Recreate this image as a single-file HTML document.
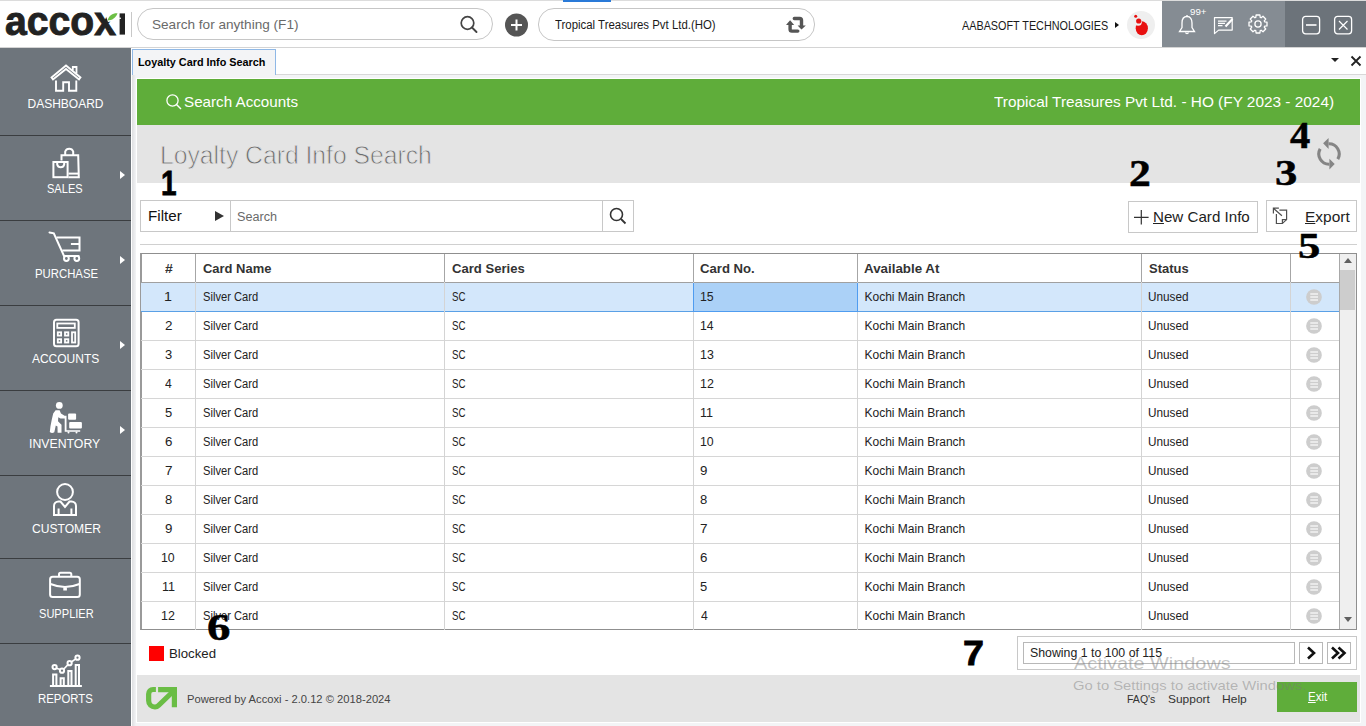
<!DOCTYPE html><html><head><meta charset="utf-8"><style>
*{box-sizing:border-box;margin:0;padding:0}
html,body{width:1366px;height:726px;overflow:hidden;background:#fff;font-family:"Liberation Sans",sans-serif;position:relative}
.abs{position:absolute}
.t{position:absolute;white-space:nowrap;line-height:normal}
</style></head><body>
<div class="abs" style="left:0px;top:0px;width:1366px;height:48px;background:#fff;border-top:1px solid #dcdcdc;border-bottom:1px solid #d4d4d4"></div>
<div class="abs" style="left:563px;top:0px;width:48px;height:2px;background:#2a7ad8"></div>
<svg class="abs" style="left:0;top:0" width="135" height="47" viewBox="0 0 135 47">
  <text x="5" y="34.6" font-family="Liberation Sans" font-weight="bold" font-size="41" fill="#222" stroke="#222" stroke-width="0.9" textLength="111" lengthAdjust="spacingAndGlyphs">accox</text>
  <path d="M104.5 12H119V20.2L108 22Z" fill="#fff"/>
  <rect x="119.6" y="13.4" width="5.4" height="21.2" fill="#222"/>
  <rect x="119.2" y="17.6" width="1.6" height="1.4" fill="#fff"/>
  <path d="M107.5 20.5 C109 15 113 13 117.5 13.3 C116 18 112 20.5 107.5 20.5Z" fill="#6cbf45"/>
</svg>
<div class="abs" style="left:131px;top:12px;width:1px;height:25px;background:#c8c8c8"></div>
<div class="abs" style="left:137px;top:8px;width:356px;height:32px;border:1px solid #c6c6c6;border-radius:16px"></div>
<div class="t" style="left:151.68px;top:16.50px;font-size:13.5px;color:#6a6a6a;font-family:'Liberation Sans',sans-serif;transform:scaleX(1.0062);transform-origin:0 0;">Search for anything (F1)</div>
<svg class="abs" style="left:459px;top:15px" width="20" height="20" viewBox="0 0 20 20"><circle cx="8.5" cy="8" r="6.3" fill="none" stroke="#444" stroke-width="1.7"/><path d="M13 12.5L17.5 17" stroke="#444" stroke-width="1.9" stroke-linecap="round"/></svg>
<svg class="abs" style="left:504px;top:13px" width="25" height="25" viewBox="0 0 25 25"><circle cx="12.5" cy="12" r="11.5" fill="#555"/><path d="M12.5 6.5V17.5M7 12H18" stroke="#fff" stroke-width="2"/></svg>
<div class="abs" style="left:538px;top:8px;width:277px;height:33px;border:1px solid #c6c6c6;border-radius:16px"></div>
<div class="t" style="left:555.45px;top:18.30px;font-size:12.3px;color:#1a1a1a;font-family:'Liberation Sans',sans-serif;transform:scaleX(0.9278);transform-origin:0 0;">Tropical Treasures Pvt Ltd.(HO)</div>
<svg class="abs" style="left:780px;top:10px" width="32" height="30" viewBox="0 0 32 30"><path d="M10.1 14V19.3Q10.1 21.1 11.9 21.1H17.8" fill="none" stroke="#555" stroke-width="3.4" stroke-linecap="round"/><path d="M6 14.9L10.1 10.2L14.2 14.9Z" fill="#555"/><path d="M14.3 8.5H19.7Q21.5 8.5 21.5 10.3V16" fill="none" stroke="#555" stroke-width="3.4" stroke-linecap="round"/><path d="M17.6 15.4L21.5 19.6L25.8 15.4Z" fill="#555"/></svg>
<div class="t" style="left:962.28px;top:18.80px;font-size:12.5px;color:#1a1a1a;font-family:'Liberation Sans',sans-serif;transform:scaleX(0.8651);transform-origin:0 0;">AABASOFT TECHNOLOGIES</div>
<div class="abs" style="left:1115px;top:22.2px;width:0;height:0;border-left:4.5px solid #111;border-top:3px solid transparent;border-bottom:3px solid transparent"></div>
<div class="abs" style="left:1127px;top:10.8px;width:28.4px;height:28.4px;border-radius:50%;background:#efefef"></div>
<svg class="abs" style="left:1126px;top:10px" width="29" height="29" viewBox="0 0 29 29"><ellipse cx="15.8" cy="18.3" rx="6.1" ry="7" fill="#e81010"/><circle cx="12.2" cy="12.2" r="3.6" fill="#efefef"/><circle cx="12.7" cy="11" r="2.6" fill="#e81010"/><circle cx="9.7" cy="6.3" r="1.5" fill="#e81010"/></svg>
<div class="abs" style="left:1162px;top:1px;width:123px;height:46px;background:#858c93"></div>
<div class="abs" style="left:1285px;top:1px;width:81px;height:46px;background:#6c737a"></div>
<svg class="abs" style="left:1176px;top:13px" width="22" height="24" viewBox="0 0 22 24"><path d="M11 3.5C7.5 3.5 6 6.5 6 10V14.5L3.5 18.5H18.5L16 14.5V10C16 6.5 14.5 3.5 11 3.5Z" fill="none" stroke="#fff" stroke-width="1.3"/><path d="M9.5 19.5A1.6 1.6 0 0 0 12.5 19.5" fill="none" stroke="#fff" stroke-width="1.3"/><path d="M11 2V3.5" stroke="#fff" stroke-width="1.3"/></svg>
<div class="t" style="left:1189.54px;top:7.00px;font-size:9px;color:#fff;font-family:'Liberation Sans',sans-serif;transform:scaleX(1.0764);transform-origin:0 0;">99+</div>
<svg class="abs" style="left:1212px;top:15px" width="24" height="21" viewBox="0 0 24 21"><path d="M2.5 2.6H20.2V15.1H6.6L2.5 18.6Z" fill="none" stroke="#fff" stroke-width="1.2" stroke-linejoin="round"/><path d="M6 6.1H14.5M6 8.4H13M6 10.7H10.5" stroke="#fff" stroke-width="1.2"/><path d="M13.5 11.5L20.5 4" stroke="#fff" stroke-width="2.2"/></svg>
<svg class="abs" style="left:1247.4px;top:13.3px" width="22" height="22" viewBox="0 0 22 22"><path d="M17.64 8.78 L20.00 9.09 L20.00 12.91 L17.64 13.22 L17.26 14.12 L18.72 16.01 L16.01 18.72 L14.12 17.26 L13.22 17.64 L12.91 20.00 L9.09 20.00 L8.78 17.64 L7.88 17.26 L5.99 18.72 L3.28 16.01 L4.74 14.12 L4.36 13.22 L2.00 12.91 L2.00 9.09 L4.36 8.78 L4.74 7.88 L3.28 5.99 L5.99 3.28 L7.88 4.74 L8.78 4.36 L9.09 2.00 L12.91 2.00 L13.22 4.36 L14.12 4.74 L16.01 3.28 L18.72 5.99 L17.26 7.88Z" fill="none" stroke="#fff" stroke-width="1.3" stroke-linejoin="round"/><circle cx="11" cy="11" r="3.1" fill="none" stroke="#fff" stroke-width="1.3"/></svg>
<svg class="abs" style="left:1301px;top:15px" width="20" height="20" viewBox="0 0 20 20"><rect x="1.6" y="1.4" width="17" height="17.4" rx="3" fill="none" stroke="#fff" stroke-width="1.3"/><path d="M5 10H15.5" stroke="#fff" stroke-width="1.6"/></svg>
<svg class="abs" style="left:1333px;top:15px" width="20" height="20" viewBox="0 0 20 20"><rect x="1.6" y="1.4" width="17" height="17.4" rx="3" fill="none" stroke="#fff" stroke-width="1.3"/><path d="M6 6L14.5 14.5M14.5 6L6 14.5" stroke="#fff" stroke-width="1.2"/></svg>
<div class="abs" style="left:0px;top:48px;width:131px;height:678px;background:#6e757c"></div>
<div class="abs" style="left:0px;top:135px;width:131px;height:1px;background:#3a3d40"></div>
<div class="abs" style="left:0px;top:220px;width:131px;height:1px;background:#3a3d40"></div>
<div class="abs" style="left:0px;top:305px;width:131px;height:1px;background:#3a3d40"></div>
<div class="abs" style="left:0px;top:390px;width:131px;height:1px;background:#3a3d40"></div>
<div class="abs" style="left:0px;top:475px;width:131px;height:1px;background:#3a3d40"></div>
<div class="abs" style="left:0px;top:558px;width:131px;height:1px;background:#3a3d40"></div>
<div class="abs" style="left:0px;top:643px;width:131px;height:1px;background:#3a3d40"></div>
<div class="t" style="left:27.52px;top:96.80px;font-size:12px;color:#fff;font-family:'Liberation Sans',sans-serif;">DASHBOARD</div>
<div class="t" style="left:47.49px;top:181.80px;font-size:12px;color:#fff;font-family:'Liberation Sans',sans-serif;transform:scaleX(0.9206);transform-origin:0 0;">SALES</div>
<div class="t" style="left:34.87px;top:266.80px;font-size:12px;color:#fff;font-family:'Liberation Sans',sans-serif;transform:scaleX(0.9450);transform-origin:0 0;">PURCHASE</div>
<div class="t" style="left:31.88px;top:351.80px;font-size:12px;color:#fff;font-family:'Liberation Sans',sans-serif;">ACCOUNTS</div>
<div class="t" style="left:29.37px;top:436.80px;font-size:12px;color:#fff;font-family:'Liberation Sans',sans-serif;transform:scaleX(1.0248);transform-origin:0 0;">INVENTORY</div>
<div class="t" style="left:31.58px;top:521.80px;font-size:12px;color:#fff;font-family:'Liberation Sans',sans-serif;transform:scaleX(1.0078);transform-origin:0 0;">CUSTOMER</div>
<div class="t" style="left:38.59px;top:606.80px;font-size:12px;color:#fff;font-family:'Liberation Sans',sans-serif;transform:scaleX(0.9221);transform-origin:0 0;">SUPPLIER</div>
<div class="t" style="left:38.47px;top:691.80px;font-size:12px;color:#fff;font-family:'Liberation Sans',sans-serif;transform:scaleX(0.9492);transform-origin:0 0;">REPORTS</div>
<div class="abs" style="left:120px;top:171px;width:0;height:0;border-left:5px solid #fff;border-top:4px solid transparent;border-bottom:4px solid transparent"></div>
<div class="abs" style="left:120px;top:256px;width:0;height:0;border-left:5px solid #fff;border-top:4px solid transparent;border-bottom:4px solid transparent"></div>
<div class="abs" style="left:120px;top:341px;width:0;height:0;border-left:5px solid #fff;border-top:4px solid transparent;border-bottom:4px solid transparent"></div>
<div class="abs" style="left:120px;top:426px;width:0;height:0;border-left:5px solid #fff;border-top:4px solid transparent;border-bottom:4px solid transparent"></div>
<!-- sidebar icons -->
<svg class="abs" style="left:0;top:47px" width="131" height="679" viewBox="0 47 131 679" fill="none" stroke="#fff" stroke-width="2">
  <!-- house -->
  <path d="M51.5 77.5L66 65.5L80.5 77.5L79 79.5L66 69L53 79.5Z" stroke-width="1.8" stroke-linejoin="miter"/>
  <path d="M72.8 70.5V67H76.5V73.5" stroke-width="1.8"/>
  <path d="M56 80.5V90.8H63.2V82.2H69V90.8H76.3V80.5" stroke-width="1.9"/>
  <!-- bags -->
  <path d="M61.5 160.5V155.2H78.2L78.8 177.2H68.5" />
  <path d="M65.2 156V151.5A4.3 4.3 0 0 1 73.2 151.5V156"/>
  <rect x="53.4" y="162" width="14.2" height="15.2"/>
  <path d="M57.2 162V164.5A3.6 3.6 0 0 0 64.2 164.5V162"/>
  <path d="M68.5 173.6H78.5"/>
  <!-- cart -->
  <path d="M49.5 232.4L53.8 233.3L64 255.9H78.6" stroke-linecap="round"/>
  <path d="M56.5 237.4H79.5V250.4H62.3"/>
  <path d="M70.9 244H79.5"/>
  <circle cx="66.4" cy="258.5" r="2.4"/>
  <circle cx="76.8" cy="258.5" r="2.4"/>
  <!-- calculator -->
  <rect x="54" y="319.8" width="24.6" height="26.4" rx="2.5"/>
  <rect x="57.3" y="323.5" width="17.5" height="4.4" stroke-width="1.8"/>
  <rect x="57.8" y="332.3" width="3.3" height="3.3" stroke-width="1.8"/>
  <rect x="65" y="332.3" width="3.3" height="3.3" stroke-width="1.8"/>
  <rect x="57.8" y="339.2" width="3.3" height="3.3" stroke-width="1.8"/>
  <rect x="65" y="339.2" width="3.3" height="3.3" stroke-width="1.8"/>
  <rect x="72" y="332.3" width="3.2" height="10.2" stroke-width="1.8"/>
  <!-- customer -->
  <circle cx="65" cy="492" r="7.9"/>
  <path d="M54 515V506A4.5 4.5 0 0 1 58.5 501.5H60.5L65 507L69.5 501.5H71.5A4.5 4.5 0 0 1 76 506V515Z"/>
  <path d="M58.6 508.5V515M71.4 508.5V515"/>
  <!-- briefcase -->
  <rect x="50.1" y="576.7" width="29.7" height="20.3" rx="2.5"/>
  <path d="M59 576.5V574.2A1.5 1.5 0 0 1 60.5 572.7H69.8A1.5 1.5 0 0 1 71.3 574.2V576.5"/>
  <path d="M50.5 584Q65 590 79.5 584"/>
  <path d="M64.2 587.5V589.5H66V587.5" stroke-width="1.8"/>
  <!-- reports -->
  <path d="M49.9 686H81.9"/>
  <path d="M53.1 686V674.6H56.4V686M60.6 686V678.2H63.8V686M68.3 686V671H71.5V686M75.7 686V665.1H79V686"/>
  <circle cx="54.6" cy="667.1" r="2.1"/>
  <circle cx="62" cy="670.7" r="2.1"/>
  <circle cx="69.6" cy="663.2" r="2.1"/>
  <circle cx="77.5" cy="657.7" r="2.1"/>
  <path d="M56.4 668.3L60.2 669.6M63.6 669.3L68 664.6M71.3 662L75.8 658.8" stroke-width="1.6"/>
  <!-- inventory (filled) -->
  <g fill="#fff" stroke="none">
    <circle cx="59.3" cy="405.4" r="3.4"/>
    <path d="M55.6 410.3L59.6 410.3L61 413.6L65 416L65.3 418.6L60.5 418.4L58.3 417.3L58 421.3L61.5 424.8L61.5 432.8L57.6 432.8L57.5 426.6L55.8 425.4L54.3 432.2Q52 433.8 49.8 432L50.5 426L51.8 419.5L53.2 413.6Z"/>
    <path d="M64.7 415.8H66.5V430.2H80.2V431.8H64.7Z"/>
    <rect x="68.1" y="413.4" width="8" height="6.3" rx="1"/>
    <rect x="69.2" y="421.9" width="12.7" height="6.6" rx="1"/>
    <circle cx="68.5" cy="432.5" r="1"/><circle cx="76.5" cy="432.5" r="1"/>
  </g>
</svg>
<div class="abs" style="left:131px;top:48px;width:6px;height:678px;background:#fff"></div>
<div class="abs" style="left:132px;top:75px;width:1234px;height:651px;background:#f3f4f6"></div>
<div class="abs" style="left:132px;top:75px;width:4px;height:651px;background:linear-gradient(90deg,#dedfe1,#f3f4f6)"></div>
<div class="abs" style="left:136px;top:78px;width:1225px;height:645px;background:#fff"></div>
<div class="abs" style="left:132px;top:49px;width:144px;height:26px;background:#f3f4f6;border:1px solid #8fb8e6;border-bottom:none"></div>
<div class="t" style="left:137.68px;top:56.00px;font-size:11.5px;color:#000;font-family:'Liberation Sans',sans-serif;font-weight:bold;transform:scaleX(0.9403);transform-origin:0 0;">Loyalty Card Info Search</div>
<div class="abs" style="left:276px;top:74px;width:1090px;height:1px;background:#d8d8d8"></div>
<div class="abs" style="left:1331px;top:58px;width:0;height:0;border-left:4px solid transparent;border-right:4px solid transparent;border-top:4px solid #222"></div>
<svg class="abs" style="left:1350px;top:55px" width="12" height="12" viewBox="0 0 12 12"><path d="M1.5 1.5L10.5 10.5M10.5 1.5L1.5 10.5" stroke="#222" stroke-width="1.8"/></svg>
<div class="abs" style="left:137px;top:79px;width:1223px;height:46px;background:#5fad3a"></div>
<svg class="abs" style="left:165px;top:93px" width="18" height="18" viewBox="0 0 18 18"><circle cx="7.5" cy="7.5" r="5.6" fill="none" stroke="#fff" stroke-width="1.3"/><path d="M11.5 11.5L16 16" stroke="#fff" stroke-width="1.4"/></svg>
<div class="t" style="left:183.80px;top:94.00px;font-size:14.6px;color:#fff;font-family:'Liberation Sans',sans-serif;transform:scaleX(1.0410);transform-origin:0 0;">Search Accounts</div>
<div class="t" style="left:994.36px;top:94.40px;font-size:14.6px;color:#fff;font-family:'Liberation Sans',sans-serif;transform:scaleX(1.0534);transform-origin:0 0;">Tropical Treasures Pvt Ltd. - HO (FY 2023 - 2024)</div>
<div class="abs" style="left:137px;top:125px;width:1223px;height:58px;background:#e4e4e4"></div>
<div class="t" style="left:160.47px;top:140.00px;font-size:26px;color:#6c6c6c;font-family:'Liberation Sans',sans-serif;transform:scaleX(0.9499);transform-origin:0 0;-webkit-text-stroke:0.8px #e4e4e4;">Loyalty Card Info Search</div>
<svg class="abs" style="left:1310px;top:132px" width="40" height="44" viewBox="0 0 40 44"><path d="M18.6 11.8A10.2 10.2 0 0 1 27.8 27.1M10.2 16.9A10.2 10.2 0 0 0 19.4 32.2" fill="none" stroke="#858585" stroke-width="3.1"/><path d="M13.1 11.3L18.6 5.9V16.9Z M24.7 32.1L19.4 26.7V37.6Z" fill="#858585"/></svg>
<div class="abs" style="left:140px;top:200px;width:494px;height:32px;border:1px solid #c8c8c8"></div>
<div class="abs" style="left:230px;top:201px;width:1px;height:30px;background:#c8c8c8"></div>
<div class="abs" style="left:602px;top:201px;width:1px;height:30px;background:#c8c8c8"></div>
<div class="t" style="left:147.56px;top:207.60px;font-size:14.3px;color:#111;font-family:'Liberation Sans',sans-serif;transform:scaleX(1.0606);transform-origin:0 0;">Filter</div>
<div class="abs" style="left:215px;top:211px;width:0;height:0;border-left:9px solid #333;border-top:5px solid transparent;border-bottom:5px solid transparent"></div>
<div class="t" style="left:236.72px;top:209.20px;font-size:13.7px;color:#6a6a6a;font-family:'Liberation Sans',sans-serif;transform:scaleX(0.9240);transform-origin:0 0;">Search</div>
<svg class="abs" style="left:608px;top:206px" width="20" height="20" viewBox="0 0 20 20"><circle cx="8.5" cy="8.5" r="6" fill="none" stroke="#333" stroke-width="1.6"/><path d="M13 13L17.5 17.5" stroke="#333" stroke-width="1.8"/></svg>
<div class="abs" style="left:1128px;top:201px;width:130px;height:32px;border:1px solid #c8c8c8"></div>
<svg class="abs" style="left:1133px;top:209px" width="17" height="17" viewBox="0 0 17 17"><path d="M8.3 1V15.6M1 8.3H15.6" stroke="#333" stroke-width="1.2"/></svg>
<div class="t" style="left:1153.26px;top:208.00px;font-size:15px;color:#222;font-family:'Liberation Sans',sans-serif;transform:scaleX(1.0095);transform-origin:0 0;"><u>N</u>ew Card Info</div>
<div class="abs" style="left:1266px;top:200px;width:91px;height:32px;border:1px solid #c8c8c8"></div>
<svg class="abs" style="left:1266px;top:198px" width="34" height="36" viewBox="0 0 34 36" fill="none" stroke="#505050" stroke-width="1.2"><path d="M7.4 15.6V10.2H12.9M7.4 10.2L15.9 17.8"/><path d="M10.4 15.9V25.5H16.4L20.6 21.6V12.1H13.4"/><path d="M16.4 25.5V21.6H20.6"/></svg>
<div class="t" style="left:1304.73px;top:208.00px;font-size:15px;color:#222;font-family:'Liberation Sans',sans-serif;transform:scaleX(1.0306);transform-origin:0 0;"><u>E</u>xport</div>
<div class="abs" style="left:140px;top:244px;width:1217px;height:1px;background:#d0d0d0"></div>
<div class="abs" style="left:140px;top:253px;width:1217px;height:377px;border:1px solid #8f8f8f;border-left:2px solid #9a9a9a"></div>
<div class="abs" style="left:141px;top:282px;width:1198px;height:29px;background:#d3e7fb"></div>
<div class="abs" style="left:693px;top:282px;width:164px;height:29px;background:#abd1f7"></div>
<div class="abs" style="left:141px;top:311px;width:1198px;height:1px;background:#5aa0e6"></div>
<div class="abs" style="left:141px;top:340px;width:1198px;height:1px;background:#d6d6d6"></div>
<div class="abs" style="left:141px;top:369px;width:1198px;height:1px;background:#d6d6d6"></div>
<div class="abs" style="left:141px;top:398px;width:1198px;height:1px;background:#d6d6d6"></div>
<div class="abs" style="left:141px;top:427px;width:1198px;height:1px;background:#d6d6d6"></div>
<div class="abs" style="left:141px;top:456px;width:1198px;height:1px;background:#d6d6d6"></div>
<div class="abs" style="left:141px;top:485px;width:1198px;height:1px;background:#d6d6d6"></div>
<div class="abs" style="left:141px;top:514px;width:1198px;height:1px;background:#d6d6d6"></div>
<div class="abs" style="left:141px;top:543px;width:1198px;height:1px;background:#d6d6d6"></div>
<div class="abs" style="left:141px;top:572px;width:1198px;height:1px;background:#d6d6d6"></div>
<div class="abs" style="left:141px;top:601px;width:1198px;height:1px;background:#d6d6d6"></div>
<div class="abs" style="left:141px;top:282px;width:1198px;height:1px;background:#a0a0a0"></div>
<div class="abs" style="left:195px;top:254px;width:1px;height:376px;background:#d4d4d4"></div>
<div class="abs" style="left:195px;top:254px;width:1px;height:28px;background:#a6a6a6"></div>
<div class="abs" style="left:444px;top:254px;width:1px;height:376px;background:#d4d4d4"></div>
<div class="abs" style="left:444px;top:254px;width:1px;height:28px;background:#a6a6a6"></div>
<div class="abs" style="left:693px;top:254px;width:1px;height:376px;background:#d4d4d4"></div>
<div class="abs" style="left:693px;top:254px;width:1px;height:28px;background:#a6a6a6"></div>
<div class="abs" style="left:857px;top:254px;width:1px;height:376px;background:#d4d4d4"></div>
<div class="abs" style="left:857px;top:254px;width:1px;height:28px;background:#a6a6a6"></div>
<div class="abs" style="left:1141px;top:254px;width:1px;height:376px;background:#d4d4d4"></div>
<div class="abs" style="left:1141px;top:254px;width:1px;height:28px;background:#a6a6a6"></div>
<div class="abs" style="left:1290px;top:254px;width:1px;height:376px;background:#d4d4d4"></div>
<div class="abs" style="left:1290px;top:254px;width:1px;height:28px;background:#a6a6a6"></div>
<div class="abs" style="left:693px;top:283px;width:165px;height:29px;border:1px solid #4f9cf0;border-top:none"></div>
<div class="t" style="left:164.66px;top:261.00px;font-size:13px;color:#333;font-family:'Liberation Sans',sans-serif;font-weight:bold;transform:scaleX(1.0737);transform-origin:0 0;">#</div>
<div class="t" style="left:202.67px;top:261.00px;font-size:13px;color:#333;font-family:'Liberation Sans',sans-serif;font-weight:bold;transform:scaleX(0.9961);transform-origin:0 0;">Card Name</div>
<div class="t" style="left:451.76px;top:261.00px;font-size:13px;color:#333;font-family:'Liberation Sans',sans-serif;font-weight:bold;transform:scaleX(1.0058);transform-origin:0 0;">Card Series</div>
<div class="t" style="left:700.46px;top:261.00px;font-size:13px;color:#333;font-family:'Liberation Sans',sans-serif;font-weight:bold;transform:scaleX(1.0106);transform-origin:0 0;">Card No.</div>
<div class="t" style="left:864.47px;top:261.00px;font-size:13px;color:#333;font-family:'Liberation Sans',sans-serif;font-weight:bold;transform:scaleX(1.0265);transform-origin:0 0;">Available At</div>
<div class="t" style="left:1149.22px;top:261.00px;font-size:13px;color:#333;font-family:'Liberation Sans',sans-serif;font-weight:bold;transform:scaleX(0.9970);transform-origin:0 0;">Status</div>
<div class="t" style="left:164.35px;top:289.70px;font-size:12px;color:#222;font-family:'Liberation Sans',sans-serif;transform:scaleX(1.1868);transform-origin:0 0;">1</div>
<div class="t" style="left:202.69px;top:289.70px;font-size:12px;color:#222;font-family:'Liberation Sans',sans-serif;transform:scaleX(0.9288);transform-origin:0 0;">Silver Card</div>
<div class="t" style="left:451.85px;top:289.70px;font-size:12px;color:#222;font-family:'Liberation Sans',sans-serif;transform:scaleX(0.8110);transform-origin:0 0;">SC</div>
<div class="t" style="left:700.06px;top:289.70px;font-size:12px;color:#222;font-family:'Liberation Sans',sans-serif;transform:scaleX(1.0292);transform-origin:0 0;">15</div>
<div class="t" style="left:864.52px;top:289.70px;font-size:12px;color:#222;font-family:'Liberation Sans',sans-serif;">Kochi Main Branch</div>
<div class="t" style="left:1148.49px;top:289.70px;font-size:12px;color:#222;font-family:'Liberation Sans',sans-serif;transform:scaleX(0.9805);transform-origin:0 0;">Unused</div>
<svg class="abs" style="left:1306px;top:289px" width="16" height="16" viewBox="0 0 16 16"><circle cx="8" cy="8" r="7.85" fill="#cdcdcd"/><path d="M4.3 5H12M4.3 8H12M4.3 11H12" stroke="#fff" stroke-opacity="0.75" stroke-width="1.3"/></svg>
<div class="t" style="left:164.76px;top:318.70px;font-size:12px;color:#222;font-family:'Liberation Sans',sans-serif;transform:scaleX(1.1218);transform-origin:0 0;">2</div>
<div class="t" style="left:202.69px;top:318.70px;font-size:12px;color:#222;font-family:'Liberation Sans',sans-serif;transform:scaleX(0.9288);transform-origin:0 0;">Silver Card</div>
<div class="t" style="left:451.85px;top:318.70px;font-size:12px;color:#222;font-family:'Liberation Sans',sans-serif;transform:scaleX(0.8110);transform-origin:0 0;">SC</div>
<div class="t" style="left:700.07px;top:318.70px;font-size:12px;color:#222;font-family:'Liberation Sans',sans-serif;transform:scaleX(1.0159);transform-origin:0 0;">14</div>
<div class="t" style="left:864.52px;top:318.70px;font-size:12px;color:#222;font-family:'Liberation Sans',sans-serif;">Kochi Main Branch</div>
<div class="t" style="left:1148.49px;top:318.70px;font-size:12px;color:#222;font-family:'Liberation Sans',sans-serif;transform:scaleX(0.9805);transform-origin:0 0;">Unused</div>
<svg class="abs" style="left:1306px;top:318px" width="16" height="16" viewBox="0 0 16 16"><circle cx="8" cy="8" r="7.85" fill="#cdcdcd"/><path d="M4.3 5H12M4.3 8H12M4.3 11H12" stroke="#fff" stroke-opacity="0.75" stroke-width="1.3"/></svg>
<div class="t" style="left:164.94px;top:347.70px;font-size:12px;color:#222;font-family:'Liberation Sans',sans-serif;transform:scaleX(1.0792);transform-origin:0 0;">3</div>
<div class="t" style="left:202.69px;top:347.70px;font-size:12px;color:#222;font-family:'Liberation Sans',sans-serif;transform:scaleX(0.9288);transform-origin:0 0;">Silver Card</div>
<div class="t" style="left:451.85px;top:347.70px;font-size:12px;color:#222;font-family:'Liberation Sans',sans-serif;transform:scaleX(0.8110);transform-origin:0 0;">SC</div>
<div class="t" style="left:700.06px;top:347.70px;font-size:12px;color:#222;font-family:'Liberation Sans',sans-serif;transform:scaleX(1.0313);transform-origin:0 0;">13</div>
<div class="t" style="left:864.52px;top:347.70px;font-size:12px;color:#222;font-family:'Liberation Sans',sans-serif;">Kochi Main Branch</div>
<div class="t" style="left:1148.49px;top:347.70px;font-size:12px;color:#222;font-family:'Liberation Sans',sans-serif;transform:scaleX(0.9805);transform-origin:0 0;">Unused</div>
<svg class="abs" style="left:1306px;top:347px" width="16" height="16" viewBox="0 0 16 16"><circle cx="8" cy="8" r="7.85" fill="#cdcdcd"/><path d="M4.3 5H12M4.3 8H12M4.3 11H12" stroke="#fff" stroke-opacity="0.75" stroke-width="1.3"/></svg>
<div class="t" style="left:165.15px;top:376.70px;font-size:12px;color:#222;font-family:'Liberation Sans',sans-serif;transform:scaleX(1.0149);transform-origin:0 0;">4</div>
<div class="t" style="left:202.69px;top:376.70px;font-size:12px;color:#222;font-family:'Liberation Sans',sans-serif;transform:scaleX(0.9288);transform-origin:0 0;">Silver Card</div>
<div class="t" style="left:451.85px;top:376.70px;font-size:12px;color:#222;font-family:'Liberation Sans',sans-serif;transform:scaleX(0.8110);transform-origin:0 0;">SC</div>
<div class="t" style="left:700.05px;top:376.70px;font-size:12px;color:#222;font-family:'Liberation Sans',sans-serif;transform:scaleX(1.0376);transform-origin:0 0;">12</div>
<div class="t" style="left:864.52px;top:376.70px;font-size:12px;color:#222;font-family:'Liberation Sans',sans-serif;">Kochi Main Branch</div>
<div class="t" style="left:1148.49px;top:376.70px;font-size:12px;color:#222;font-family:'Liberation Sans',sans-serif;transform:scaleX(0.9805);transform-origin:0 0;">Unused</div>
<svg class="abs" style="left:1306px;top:376px" width="16" height="16" viewBox="0 0 16 16"><circle cx="8" cy="8" r="7.85" fill="#cdcdcd"/><path d="M4.3 5H12M4.3 8H12M4.3 11H12" stroke="#fff" stroke-opacity="0.75" stroke-width="1.3"/></svg>
<div class="t" style="left:164.91px;top:405.70px;font-size:12px;color:#222;font-family:'Liberation Sans',sans-serif;transform:scaleX(1.0792);transform-origin:0 0;">5</div>
<div class="t" style="left:202.69px;top:405.70px;font-size:12px;color:#222;font-family:'Liberation Sans',sans-serif;transform:scaleX(0.9288);transform-origin:0 0;">Silver Card</div>
<div class="t" style="left:451.85px;top:405.70px;font-size:12px;color:#222;font-family:'Liberation Sans',sans-serif;transform:scaleX(0.8110);transform-origin:0 0;">SC</div>
<div class="t" style="left:700.05px;top:405.70px;font-size:12px;color:#222;font-family:'Liberation Sans',sans-serif;transform:scaleX(1.0460);transform-origin:0 0;">11</div>
<div class="t" style="left:864.52px;top:405.70px;font-size:12px;color:#222;font-family:'Liberation Sans',sans-serif;">Kochi Main Branch</div>
<div class="t" style="left:1148.49px;top:405.70px;font-size:12px;color:#222;font-family:'Liberation Sans',sans-serif;transform:scaleX(0.9805);transform-origin:0 0;">Unused</div>
<svg class="abs" style="left:1306px;top:405px" width="16" height="16" viewBox="0 0 16 16"><circle cx="8" cy="8" r="7.85" fill="#cdcdcd"/><path d="M4.3 5H12M4.3 8H12M4.3 11H12" stroke="#fff" stroke-opacity="0.75" stroke-width="1.3"/></svg>
<div class="t" style="left:164.75px;top:434.70px;font-size:12px;color:#222;font-family:'Liberation Sans',sans-serif;transform:scaleX(1.1096);transform-origin:0 0;">6</div>
<div class="t" style="left:202.69px;top:434.70px;font-size:12px;color:#222;font-family:'Liberation Sans',sans-serif;transform:scaleX(0.9288);transform-origin:0 0;">Silver Card</div>
<div class="t" style="left:451.85px;top:434.70px;font-size:12px;color:#222;font-family:'Liberation Sans',sans-serif;transform:scaleX(0.8110);transform-origin:0 0;">SC</div>
<div class="t" style="left:700.06px;top:434.70px;font-size:12px;color:#222;font-family:'Liberation Sans',sans-serif;transform:scaleX(1.0261);transform-origin:0 0;">10</div>
<div class="t" style="left:864.52px;top:434.70px;font-size:12px;color:#222;font-family:'Liberation Sans',sans-serif;">Kochi Main Branch</div>
<div class="t" style="left:1148.49px;top:434.70px;font-size:12px;color:#222;font-family:'Liberation Sans',sans-serif;transform:scaleX(0.9805);transform-origin:0 0;">Unused</div>
<svg class="abs" style="left:1306px;top:434px" width="16" height="16" viewBox="0 0 16 16"><circle cx="8" cy="8" r="7.85" fill="#cdcdcd"/><path d="M4.3 5H12M4.3 8H12M4.3 11H12" stroke="#fff" stroke-opacity="0.75" stroke-width="1.3"/></svg>
<div class="t" style="left:164.74px;top:463.70px;font-size:12px;color:#222;font-family:'Liberation Sans',sans-serif;transform:scaleX(1.1242);transform-origin:0 0;">7</div>
<div class="t" style="left:202.69px;top:463.70px;font-size:12px;color:#222;font-family:'Liberation Sans',sans-serif;transform:scaleX(0.9288);transform-origin:0 0;">Silver Card</div>
<div class="t" style="left:451.85px;top:463.70px;font-size:12px;color:#222;font-family:'Liberation Sans',sans-serif;transform:scaleX(0.8110);transform-origin:0 0;">SC</div>
<div class="t" style="left:700.38px;top:463.70px;font-size:12px;color:#222;font-family:'Liberation Sans',sans-serif;transform:scaleX(1.1072);transform-origin:0 0;">9</div>
<div class="t" style="left:864.52px;top:463.70px;font-size:12px;color:#222;font-family:'Liberation Sans',sans-serif;">Kochi Main Branch</div>
<div class="t" style="left:1148.49px;top:463.70px;font-size:12px;color:#222;font-family:'Liberation Sans',sans-serif;transform:scaleX(0.9805);transform-origin:0 0;">Unused</div>
<svg class="abs" style="left:1306px;top:463px" width="16" height="16" viewBox="0 0 16 16"><circle cx="8" cy="8" r="7.85" fill="#cdcdcd"/><path d="M4.3 5H12M4.3 8H12M4.3 11H12" stroke="#fff" stroke-opacity="0.75" stroke-width="1.3"/></svg>
<div class="t" style="left:164.87px;top:492.70px;font-size:12px;color:#222;font-family:'Liberation Sans',sans-serif;transform:scaleX(1.0883);transform-origin:0 0;">8</div>
<div class="t" style="left:202.69px;top:492.70px;font-size:12px;color:#222;font-family:'Liberation Sans',sans-serif;transform:scaleX(0.9288);transform-origin:0 0;">Silver Card</div>
<div class="t" style="left:451.85px;top:492.70px;font-size:12px;color:#222;font-family:'Liberation Sans',sans-serif;transform:scaleX(0.8110);transform-origin:0 0;">SC</div>
<div class="t" style="left:700.44px;top:492.70px;font-size:12px;color:#222;font-family:'Liberation Sans',sans-serif;transform:scaleX(1.0883);transform-origin:0 0;">8</div>
<div class="t" style="left:864.52px;top:492.70px;font-size:12px;color:#222;font-family:'Liberation Sans',sans-serif;">Kochi Main Branch</div>
<div class="t" style="left:1148.49px;top:492.70px;font-size:12px;color:#222;font-family:'Liberation Sans',sans-serif;transform:scaleX(0.9805);transform-origin:0 0;">Unused</div>
<svg class="abs" style="left:1306px;top:492px" width="16" height="16" viewBox="0 0 16 16"><circle cx="8" cy="8" r="7.85" fill="#cdcdcd"/><path d="M4.3 5H12M4.3 8H12M4.3 11H12" stroke="#fff" stroke-opacity="0.75" stroke-width="1.3"/></svg>
<div class="t" style="left:164.81px;top:521.70px;font-size:12px;color:#222;font-family:'Liberation Sans',sans-serif;transform:scaleX(1.1072);transform-origin:0 0;">9</div>
<div class="t" style="left:202.69px;top:521.70px;font-size:12px;color:#222;font-family:'Liberation Sans',sans-serif;transform:scaleX(0.9288);transform-origin:0 0;">Silver Card</div>
<div class="t" style="left:451.85px;top:521.70px;font-size:12px;color:#222;font-family:'Liberation Sans',sans-serif;transform:scaleX(0.8110);transform-origin:0 0;">SC</div>
<div class="t" style="left:700.31px;top:521.70px;font-size:12px;color:#222;font-family:'Liberation Sans',sans-serif;transform:scaleX(1.1242);transform-origin:0 0;">7</div>
<div class="t" style="left:864.52px;top:521.70px;font-size:12px;color:#222;font-family:'Liberation Sans',sans-serif;">Kochi Main Branch</div>
<div class="t" style="left:1148.49px;top:521.70px;font-size:12px;color:#222;font-family:'Liberation Sans',sans-serif;transform:scaleX(0.9805);transform-origin:0 0;">Unused</div>
<svg class="abs" style="left:1306px;top:521px" width="16" height="16" viewBox="0 0 16 16"><circle cx="8" cy="8" r="7.85" fill="#cdcdcd"/><path d="M4.3 5H12M4.3 8H12M4.3 11H12" stroke="#fff" stroke-opacity="0.75" stroke-width="1.3"/></svg>
<div class="t" style="left:161.43px;top:550.70px;font-size:12px;color:#222;font-family:'Liberation Sans',sans-serif;transform:scaleX(1.0261);transform-origin:0 0;">10</div>
<div class="t" style="left:202.69px;top:550.70px;font-size:12px;color:#222;font-family:'Liberation Sans',sans-serif;transform:scaleX(0.9288);transform-origin:0 0;">Silver Card</div>
<div class="t" style="left:451.85px;top:550.70px;font-size:12px;color:#222;font-family:'Liberation Sans',sans-serif;transform:scaleX(0.8110);transform-origin:0 0;">SC</div>
<div class="t" style="left:700.32px;top:550.70px;font-size:12px;color:#222;font-family:'Liberation Sans',sans-serif;transform:scaleX(1.1096);transform-origin:0 0;">6</div>
<div class="t" style="left:864.52px;top:550.70px;font-size:12px;color:#222;font-family:'Liberation Sans',sans-serif;">Kochi Main Branch</div>
<div class="t" style="left:1148.49px;top:550.70px;font-size:12px;color:#222;font-family:'Liberation Sans',sans-serif;transform:scaleX(0.9805);transform-origin:0 0;">Unused</div>
<svg class="abs" style="left:1306px;top:550px" width="16" height="16" viewBox="0 0 16 16"><circle cx="8" cy="8" r="7.85" fill="#cdcdcd"/><path d="M4.3 5H12M4.3 8H12M4.3 11H12" stroke="#fff" stroke-opacity="0.75" stroke-width="1.3"/></svg>
<div class="t" style="left:161.82px;top:579.70px;font-size:12px;color:#222;font-family:'Liberation Sans',sans-serif;transform:scaleX(1.0460);transform-origin:0 0;">11</div>
<div class="t" style="left:202.69px;top:579.70px;font-size:12px;color:#222;font-family:'Liberation Sans',sans-serif;transform:scaleX(0.9288);transform-origin:0 0;">Silver Card</div>
<div class="t" style="left:451.85px;top:579.70px;font-size:12px;color:#222;font-family:'Liberation Sans',sans-serif;transform:scaleX(0.8110);transform-origin:0 0;">SC</div>
<div class="t" style="left:700.48px;top:579.70px;font-size:12px;color:#222;font-family:'Liberation Sans',sans-serif;transform:scaleX(1.0792);transform-origin:0 0;">5</div>
<div class="t" style="left:864.52px;top:579.70px;font-size:12px;color:#222;font-family:'Liberation Sans',sans-serif;">Kochi Main Branch</div>
<div class="t" style="left:1148.49px;top:579.70px;font-size:12px;color:#222;font-family:'Liberation Sans',sans-serif;transform:scaleX(0.9805);transform-origin:0 0;">Unused</div>
<svg class="abs" style="left:1306px;top:579px" width="16" height="16" viewBox="0 0 16 16"><circle cx="8" cy="8" r="7.85" fill="#cdcdcd"/><path d="M4.3 5H12M4.3 8H12M4.3 11H12" stroke="#fff" stroke-opacity="0.75" stroke-width="1.3"/></svg>
<div class="t" style="left:161.42px;top:608.70px;font-size:12px;color:#222;font-family:'Liberation Sans',sans-serif;transform:scaleX(1.0376);transform-origin:0 0;">12</div>
<div class="t" style="left:202.69px;top:608.70px;font-size:12px;color:#222;font-family:'Liberation Sans',sans-serif;transform:scaleX(0.9288);transform-origin:0 0;">Silver Card</div>
<div class="t" style="left:451.85px;top:608.70px;font-size:12px;color:#222;font-family:'Liberation Sans',sans-serif;transform:scaleX(0.8110);transform-origin:0 0;">SC</div>
<div class="t" style="left:700.72px;top:608.70px;font-size:12px;color:#222;font-family:'Liberation Sans',sans-serif;transform:scaleX(1.0149);transform-origin:0 0;">4</div>
<div class="t" style="left:864.52px;top:608.70px;font-size:12px;color:#222;font-family:'Liberation Sans',sans-serif;">Kochi Main Branch</div>
<div class="t" style="left:1148.49px;top:608.70px;font-size:12px;color:#222;font-family:'Liberation Sans',sans-serif;transform:scaleX(0.9805);transform-origin:0 0;">Unused</div>
<svg class="abs" style="left:1306px;top:608px" width="16" height="16" viewBox="0 0 16 16"><circle cx="8" cy="8" r="7.85" fill="#cdcdcd"/><path d="M4.3 5H12M4.3 8H12M4.3 11H12" stroke="#fff" stroke-opacity="0.75" stroke-width="1.3"/></svg>
<div class="abs" style="left:1339px;top:254px;width:17px;height:375px;background:#efefef;border-left:1px solid #a8a8a8"></div>
<div class="abs" style="left:1340px;top:270px;width:15px;height:40px;background:#cdcdcd"></div>
<div class="abs" style="left:1344px;top:258px;width:0;height:0;border-left:4px solid transparent;border-right:4px solid transparent;border-bottom:5px solid #606060"></div>
<div class="abs" style="left:1344px;top:617px;width:0;height:0;border-left:4px solid transparent;border-right:4px solid transparent;border-top:5px solid #606060"></div>
<div class="abs" style="left:149px;top:646px;width:15px;height:15px;background:#f00"></div>
<div class="t" style="left:169.22px;top:646.00px;font-size:12.8px;color:#222;font-family:'Liberation Sans',sans-serif;transform:scaleX(1.0330);transform-origin:0 0;">Blocked</div>
<div class="abs" style="left:1017px;top:636px;width:340px;height:34px;border:1px solid #c8c8c8"></div>
<div class="abs" style="left:1023px;top:642px;width:272px;height:22px;border:1px solid #b8b8b8"></div>
<div class="t" style="left:1030.43px;top:646.10px;font-size:12px;color:#222;font-family:'Liberation Sans',sans-serif;transform:scaleX(1.0268);transform-origin:0 0;">Showing 1 to 100 of 115</div>
<div class="abs" style="left:1299px;top:642px;width:24px;height:22px;border:1px solid #b8b8b8"></div>
<div class="abs" style="left:1327px;top:642px;width:24px;height:22px;border:1px solid #b8b8b8"></div>
<svg class="abs" style="left:1299px;top:642px" width="24" height="22" viewBox="0 0 24 22"><path d="M9 5.5L15 11L9 16.5" fill="none" stroke="#111" stroke-width="2.6"/></svg>
<svg class="abs" style="left:1327px;top:642px" width="24" height="22" viewBox="0 0 24 22"><path d="M5 5.5L11 11L5 16.5M11.5 5.5L17.5 11L11.5 16.5" fill="none" stroke="#111" stroke-width="2.6"/></svg>
<div class="abs" style="left:137px;top:675px;width:1223px;height:47px;background:#e4e4e4"></div>
<svg class="abs" style="left:140px;top:680px" width="45" height="35" viewBox="0 0 45 35"><path d="M15.9 9.5H13C10.5 9.5 8.65 11.4 8.65 14V20.5C8.65 24.5 11.5 27 15 27C16.5 27 17.5 26.5 18.5 25.5L32.5 12" fill="none" stroke="#6abd45" stroke-width="5.2"/><path d="M18.1 7H37V27.3H31.8V12.3H18.1Z" fill="#6abd45"/></svg>
<div class="t" style="left:187.48px;top:693.20px;font-size:11.5px;color:#444;font-family:'Liberation Sans',sans-serif;transform:scaleX(0.9729);transform-origin:0 0;">Powered by Accoxi - 2.0.12 © 2018-2024</div>
<div class="t" style="left:1126.64px;top:693.20px;font-size:11.5px;color:#333;font-family:'Liberation Sans',sans-serif;transform:scaleX(0.9159);transform-origin:0 0;">FAQ's</div>
<div class="t" style="left:1167.75px;top:693.20px;font-size:11.5px;color:#333;font-family:'Liberation Sans',sans-serif;transform:scaleX(1.0384);transform-origin:0 0;">Support</div>
<div class="t" style="left:1222.21px;top:693.20px;font-size:11.5px;color:#333;font-family:'Liberation Sans',sans-serif;transform:scaleX(1.0482);transform-origin:0 0;">Help</div>
<div class="abs" style="left:1277px;top:682px;width:80px;height:30px;background:#5fad3a"></div>
<div class="t" style="left:1307.75px;top:689.90px;font-size:12.2px;color:#fff;font-family:'Liberation Sans',sans-serif;transform:scaleX(0.9454);transform-origin:0 0;"><u>E</u>xit</div>
<div class="t" style="left:1073.66px;top:655.00px;font-size:16px;color:rgba(120,120,120,0.45);font-family:'Liberation Sans',sans-serif;transform:scaleX(1.2406);transform-origin:0 0;">Activate Windows</div>
<div class="t" style="left:1072.96px;top:677.50px;font-size:13.3px;color:rgba(120,120,120,0.45);font-family:'Liberation Sans',sans-serif;transform:scaleX(1.1117);transform-origin:0 0;">Go to Settings to activate Windows.</div>
<div class="t" style="left:161.24px;top:163.40px;font-size:35.61px;color:#000;font-family:'Liberation Sans',sans-serif;font-weight:bold;transform:scaleX(0.7851);transform-origin:0 0;-webkit-text-stroke:0.8px #000;">1</div>
<div class="t" style="left:1129.32px;top:151.55px;font-size:36.86px;color:#000;font-family:'Liberation Serif',serif;font-weight:bold;transform:scaleX(1.1832);transform-origin:0 0;-webkit-text-stroke:0.5px #000;">2</div>
<div class="t" style="left:1274.95px;top:152.39px;font-size:35.71px;color:#000;font-family:'Liberation Serif',serif;font-weight:bold;transform:scaleX(1.2497);transform-origin:0 0;-webkit-text-stroke:0.5px #000;">3</div>
<div class="t" style="left:1289.68px;top:113.05px;font-size:37.84px;color:#000;font-family:'Liberation Serif',serif;font-weight:bold;transform:scaleX(1.0695);transform-origin:0 0;-webkit-text-stroke:0.5px #000;">4</div>
<div class="t" style="left:1298.06px;top:224.89px;font-size:36.39px;color:#000;font-family:'Liberation Serif',serif;font-weight:bold;transform:scaleX(1.2278);transform-origin:0 0;-webkit-text-stroke:0.5px #000;">5</div>
<div class="t" style="left:206.66px;top:605.37px;font-size:37.95px;color:#000;font-family:'Liberation Serif',serif;font-weight:bold;transform:scaleX(1.2361);transform-origin:0 0;-webkit-text-stroke:0.5px #000;">6</div>
<div class="t" style="left:962.78px;top:633.40px;font-size:34.88px;color:#000;font-family:'Liberation Sans',sans-serif;font-weight:bold;transform:scaleX(1.0820);transform-origin:0 0;-webkit-text-stroke:0.8px #000;">7</div>
</body></html>
